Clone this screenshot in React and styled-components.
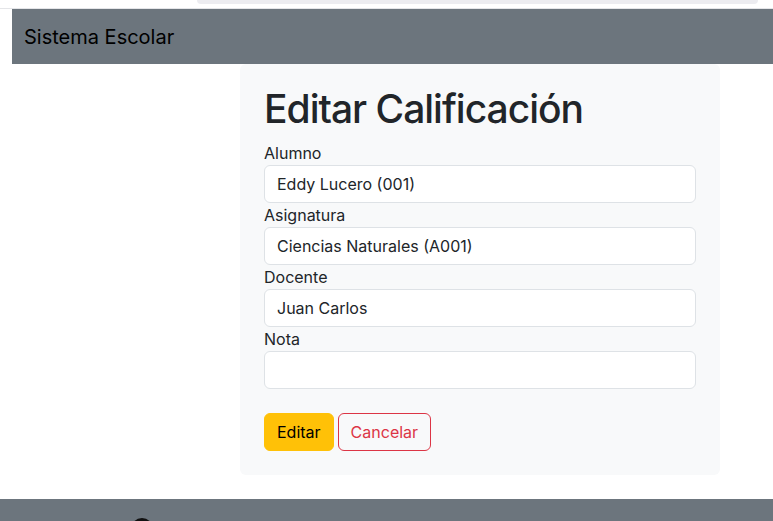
import styled, { createGlobalStyle } from "styled-components";

const GlobalStyle = createGlobalStyle`
  html, body {
    margin: 0;
    padding: 0;
    background: #fff;
    overflow: hidden;
  }
  body {
    font-family: Inter, "Noto Sans", "Liberation Sans", sans-serif;
    color: #212529;
    font-size: 16px;
    line-height: 1.5;
  }
  * {
    box-sizing: border-box;
  }
`;

const Page = styled.div`
  display: flex;
  flex-direction: column;
  width: 773px;
  height: 521px;
  overflow: hidden;
`;

const TopStrip = styled.div`
  display: flex;
  height: 9px;
  border-bottom: 1px solid #e4e5e8;
`;

const ScrollPill = styled.div`
  margin-left: 197px;
  width: 561px;
  height: 4px;
  background: #ececf0;
  border-radius: 0 0 8px 8px;
`;

const Navbar = styled.header`
  display: flex;
  align-items: center;
  margin-left: 12px;
  height: 55px;
  padding: 0 12px;
  background: #6c757d;
`;

const Brand = styled.span`
  font-size: 20px;
  color: #000;
`;

const Main = styled.main`
  display: flex;
  padding-left: 240px;
`;

const Card = styled.section`
  width: 480px;
  padding: 21px 24px 24px;
  background: #f8f9fa;
  border-radius: 6px;
`;

const Title = styled.h1`
  margin: 0 0 8px;
  font-size: 39px;
  font-weight: 500;
  letter-spacing: -1px;
  line-height: 48px;
  color: #212529;
`;

const Field = styled.div`
  display: flex;
  flex-direction: column;
`;

const Label = styled.label`
  line-height: 24px;
`;

const Input = styled.input`
  height: 38px;
  padding: 6px 12px;
  font: inherit;
  color: #212529;
  background: #fff;
  border: 1px solid #dee2e6;
  border-radius: 6px;
  outline: none;
`;

const Actions = styled.div`
  display: flex;
  gap: 4px;
  margin-top: 24px;
`;

const Button = styled.button`
  height: 38px;
  padding: 6px 12px;
  font: inherit;
  border-radius: 6px;
  border: 1px solid ${(p) => (p.$variant === "danger" ? "#dc3545" : "#ffc107")};
  background: ${(p) => (p.$variant === "danger" ? "transparent" : "#ffc107")};
  color: ${(p) => (p.$variant === "danger" ? "#dc3545" : "#000")};
`;

const Footer = styled.footer`
  position: relative;
  margin-top: 24px;
  flex: 1;
  background: #6c757d;
`;

const FooterIcon = styled.div`
  position: absolute;
  left: 131px;
  top: 19px;
  width: 22px;
  height: 22px;
  border-radius: 50%;
  background: #111;
`;

const fields = [
  { label: "Alumno", value: "Eddy Lucero (001)" },
  { label: "Asignatura", value: "Ciencias Naturales (A001)" },
  { label: "Docente", value: "Juan Carlos" },
  { label: "Nota", value: "" },
];

const App = () => {
  return (
    <>
      <GlobalStyle />
      <Page>
        <TopStrip>
          <ScrollPill />
        </TopStrip>
        <Navbar>
          <Brand>Sistema Escolar</Brand>
        </Navbar>
        <Main>
          <Card>
            <Title>Editar Calificación</Title>
            {fields.map((f) => (
              <Field key={f.label}>
                <Label>{f.label}</Label>
                <Input defaultValue={f.value} readOnly />
              </Field>
            ))}
            <Actions>
              <Button>Editar</Button>
              <Button $variant="danger">Cancelar</Button>
            </Actions>
          </Card>
        </Main>
        <Footer>
          <FooterIcon />
        </Footer>
      </Page>
    </>
  );
};

export default App;
